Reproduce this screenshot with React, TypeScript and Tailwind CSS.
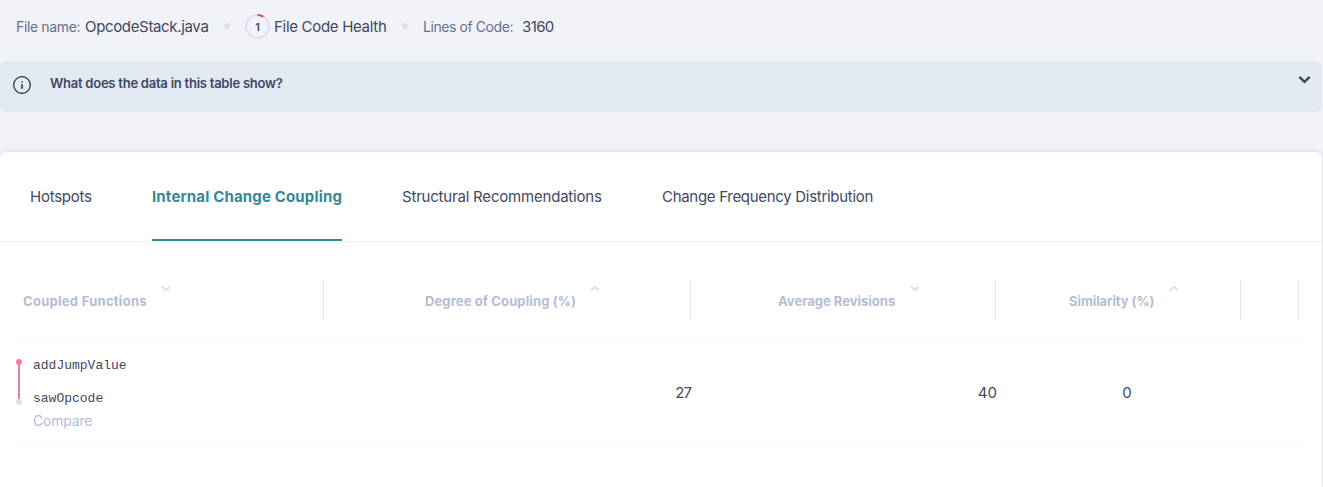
import type { ReactNode } from "react";

function Chevron({ up = false, className }: { up?: boolean; className: string }) {
  return (
    <svg viewBox="0 0 10 7" fill="none" stroke="currentColor" strokeWidth="2" className={className}>
      <path d={up ? "M1 5.5 5 1.7l4 3.8" : "M1 1.5 5 5.3l4-3.8"} />
    </svg>
  );
}

function Separator({ className }: { className: string }) {
  return <span className={`size-1.5 shrink-0 rounded-full bg-[#dae1ed] ${className}`} />;
}

function HealthScore() {
  return (
    <span className="ml-[15px] grid size-[25px] shrink-0 place-items-center">
      <svg viewBox="0 0 25 25" fill="none" className="col-start-1 row-start-1 size-[25px]">
        <circle cx="12.5" cy="12.5" r="11.5" stroke="#dae1ed" strokeWidth="2" />
        <path d="M12.5 1A11.5 11.5 0 0 1 18.3 2.6" stroke="#ef4056" strokeWidth="2" />
      </svg>
      <span className="col-start-1 row-start-1 mt-[2px] text-[11px] leading-none font-semibold">1</span>
    </span>
  );
}

const tabs = [
  { label: "Hotspots", style: "w-[62px] tracking-[-0.25px]" },
  { label: "Internal Change Coupling", style: "w-[190px] font-bold tracking-[0.16px] text-[#388697]", active: true },
  { label: "Structural Recommendations", style: "w-[200px] tracking-[-0.2px]" },
  { label: "Change Frequency Distribution", style: "w-[212px] tracking-[-0.3px]" },
];

function HeaderCell({ width, icon, children }: { width: string; icon?: ReactNode; children?: ReactNode }) {
  return (
    <div className={`flex h-10 shrink-0 border-r border-[#e2e8f3] ${width}`}>
      <span className="mt-[11px] whitespace-nowrap leading-5">{children}</span>
      {icon}
    </div>
  );
}

export default function App() {
  return (
    <main className="flex h-[487px] w-[1323px] flex-col overflow-hidden bg-[#f2f3f8] font-['Inter','Liberation_Sans',sans-serif] text-[15px] text-[#3f4861]">
      <header className="flex h-[61px] items-start whitespace-nowrap">
        <div className="flex h-[52px] items-center pl-4">
          <span className="w-[69px] pt-px text-[14px] tracking-[-0.36px] text-[#66718f]">File name:</span>
          <span className="w-[124px] pt-[2px] tracking-[-0.34px]">OpcodeStack.java</span>
          <Separator className="ml-[15px]" />
          <HealthScore />
          <span className="ml-[4px] w-[113px] pt-[2px] tracking-[-0.3px]">File Code Health</span>
          <Separator className="ml-[15px]" />
          <span className="ml-[15px] w-[99px] pt-px text-[14px] tracking-[-0.42px] text-[#66718f]">Lines of Code:</span>
          <span className="pt-[2px] tracking-[-0.6px]">3160</span>
        </div>
      </header>

      <section className="flex h-[51px] w-[1322px] shrink-0 items-start rounded-md bg-[#e2e9f3] pl-[13px] pr-[11px]">
        <svg viewBox="0 0 18 18" fill="none" stroke="#252830" className="mt-[15px] size-[18px]">
          <circle cx="9" cy="9" r="8.3" strokeWidth="1.2" />
          <path d="M9 8.2v4.6M9 5.3v1.3" strokeWidth="1.5" />
        </svg>
        <h2 className="mt-[12px] ml-[19px] text-[13px] leading-5 font-semibold tracking-[-0.24px]">What does the data in this table show?</h2>
        <Chevron className="mt-[14px] ml-auto h-[9px] w-[13px]" />
      </section>

      <section className="mt-10 flex h-[335px] w-[1322px] shrink-0 flex-col rounded-t-md bg-white shadow-[0_0_5px_rgba(30,35,50,0.14)]">
        <nav className="flex h-[90px] shrink-0 gap-[60px] border-b border-[#f1f2f4] pl-[30px]">
          {tabs.map(({ label, style, active }) => (
            <button
              key={label}
              className={`h-[89px] shrink-0 whitespace-nowrap border-b-2 pt-1 text-left ${active ? "border-[#388697]" : "border-transparent"} ${style}`}
            >
              {label}
            </button>
          ))}
        </nav>

        <div className="mr-[18px] ml-4 flex h-[99px] shrink-0 items-start border-b border-[#f6f6f7] pt-[38px] text-[13px] font-bold text-[#b3bed1]">
          <HeaderCell width="w-[308px] pl-[7px] tracking-[0.28px]" icon={<Chevron className="ml-auto mr-[152px] mt-[5px] h-[7px] w-[10px] text-[#e1e2e5]" />}>
            Coupled Functions
          </HeaderCell>
          <HeaderCell width="w-[367px] pl-[101px] tracking-[0.12px]" icon={<Chevron up className="ml-auto mr-[90px] mt-[5px] h-[7px] w-[10px] text-[#e1e2e5]" />}>
            Degree of Coupling (%)
          </HeaderCell>
          <HeaderCell width="w-[305px] pl-[87px]" icon={<Chevron className="ml-auto mr-[75px] mt-[5px] h-[7px] w-[10px] text-[#e1e2e5]" />}>
            Average Revisions
          </HeaderCell>
          <HeaderCell width="w-[245px] pl-[73px] tracking-[-0.07px]" icon={<Chevron up className="ml-auto mr-[61px] mt-[5px] h-[7px] w-[10px] text-[#e1e2e5]" />}>
            Similarity (%)
          </HeaderCell>
          <HeaderCell width="w-[58px]" />
        </div>

        <div className="mr-[18px] ml-4 flex h-[103px] shrink-0 border-b border-[#f6f6f7]">
          <svg viewBox="0 0 6 46" className="mt-[18px] h-[46px] w-[6px]">
            <path d="M3 3v38" stroke="#ed7f91" strokeWidth="2" />
            <circle cx="3" cy="3" r="3" fill="#ed7f91" />
            <circle cx="3" cy="43" r="3" fill="#e1e2e5" />
          </svg>
          <div className="ml-[11px] flex w-[291px] flex-col items-start pt-[15px]">
            <span className="font-['Liberation_Mono',monospace] text-[13px] leading-5">addJumpValue</span>
            <span className="mt-[13px] font-['Liberation_Mono',monospace] text-[13px] leading-5">sawOpcode</span>
            <span className="mt-[2px] text-[14px] leading-5 tracking-[-0.2px] text-[#b3bed1]">Compare</span>
          </div>
          <span className="w-[367px] pt-[42px] text-right leading-5 tracking-[-0.9px]">27</span>
          <span className="w-[306px] pt-[42px] text-right leading-5">40</span>
          <span className="w-[260px] pt-[42px] text-center leading-5">0</span>
        </div>
      </section>
    </main>
  );
}
